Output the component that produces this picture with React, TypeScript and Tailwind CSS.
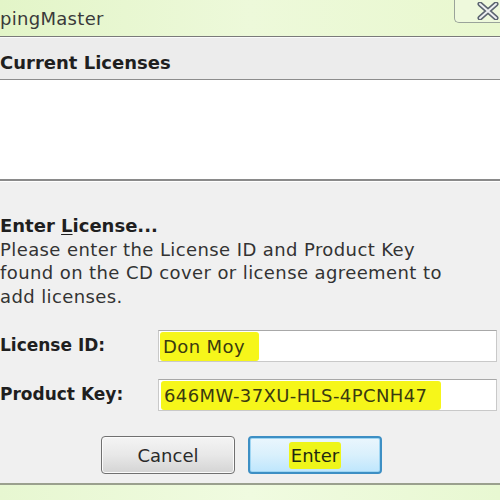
import { useState } from "react";

const font = { fontFamily: '"DejaVu Sans", Verdana, Tahoma, sans-serif' };

const CloseGlyph = () => (
  <svg width="22" height="18" viewBox="0 0 22 18">
    <path
      d="M3 2 L19 16 M19 2 L3 16"
      stroke="#5b6470"
      strokeWidth="5"
      strokeLinecap="round"
    />
    <path
      d="M3 2 L19 16 M19 2 L3 16"
      stroke="#eef0f2"
      strokeWidth="2"
      strokeLinecap="round"
    />
  </svg>
);

const App = () => {
  const [licenseId, setLicenseId] = useState("Don Moy");
  const [productKey, setProductKey] = useState("646MW-37XU-HLS-4PCNH47");

  return (
    <div
      className="w-[500px] h-[500px] overflow-hidden flex flex-col bg-[#f0f0f0] text-[#222]"
      style={font}
    >
      {/* title bar */}
      <div className="h-[37px] shrink-0 flex items-start justify-between bg-gradient-to-r from-[#e3f5c8] via-[#edf9da] to-[#e9f8cf] border-b border-[#7a7a7a]">
        <span className="mt-[5px] text-[18px] tracking-[0.3px] text-[#3a3a3a]">pingMaster</span>
        <div className="w-[46px] h-[24px] -mt-[1px] flex items-center justify-end pr-[1px] border-l border-b border-[#9aa39a] rounded-bl-[5px] bg-[#eef9dc]">
          <CloseGlyph />
        </div>
      </div>

      {/* current licenses header */}
      <div className="h-[43px] shrink-0 flex items-end pb-[6px] bg-[#ececec] border-t border-[#fafafa] border-b border-b-[#8c8c8c]">
        <span className="text-[18px] leading-[20px] font-bold text-[#1f1f1f]">Current Licenses</span>
      </div>

      {/* list area */}
      <div className="h-[101px] shrink-0 bg-white border-b-2 border-[#8a8a8a]" />

      {/* form */}
      <div className="flex-1 flex flex-col border-t border-white pt-[30px]">
        <div className="text-[18px] leading-[23.5px] tracking-[0.4px]">
          <div className="pt-[2px] font-bold text-[#1f1f1f] tracking-normal">
            Enter <span className="underline underline-offset-2">L</span>icense...
          </div>
          <div className="text-[#333] whitespace-nowrap">
            Please enter the License ID and Product Key
            <br />
            found on the CD cover or license agreement to
            <br />
            add licenses.
          </div>
        </div>

        <div className="mt-[22px] flex flex-col gap-[17px]">
          <div className="flex items-center">
            <label className="w-[158px] text-[17px] font-bold text-[#1f1f1f]">License ID:</label>
            <div className="w-[339px] h-[32px] flex items-center bg-white border border-[#c9c9c9] border-t-[#a8a8a8]">
              <input
                value={licenseId}
                onChange={(e) => setLicenseId(e.target.value)}
                className="ml-[1px] h-[29px] px-[3px] w-[99px] bg-[#f6f61a] rounded-[3px] text-[18px] tracking-[0.4px] text-[#3a3a10] outline-none"
                style={font}
              />
            </div>
          </div>
          <div className="flex items-center">
            <label className="w-[158px] text-[17px] font-bold text-[#1f1f1f]">Product Key:</label>
            <div className="w-[339px] h-[32px] flex items-center bg-white border border-[#c9c9c9] border-t-[#a8a8a8]">
              <input
                value={productKey}
                onChange={(e) => setProductKey(e.target.value)}
                className="ml-[2px] h-[29px] px-[3px] w-[280px] bg-[#f6f61a] rounded-[3px] text-[18px] tracking-[0.4px] text-[#3a3a10] outline-none"
                style={font}
              />
            </div>
          </div>
        </div>

        <div className="mt-[25px] ml-[101px] flex gap-[13px]">
          <button
            className="w-[134px] h-[38px] rounded-[4px] border border-[#707070] bg-gradient-to-b from-[#f4f4f4] via-[#e8e8e8] to-[#d4d4d4] text-[18px] text-[#2a2a2a] shadow-[inset_0_0_0_1px_#fbfbfb]"
            style={font}
          >
            Cancel
          </button>
          <button
            className="w-[134px] h-[38px] rounded-[4px] border-2 border-[#3d8fc4] bg-gradient-to-b from-[#eaf6fd] via-[#d9f0fc] to-[#bee6fd] text-[18px] text-[#1f2a10] shadow-[inset_0_0_0_1px_#9fd6f3] flex items-center justify-center"
            style={font}
          >
            <span className="bg-[#eef51a] px-[2px] rounded-[3px]">Enter</span>
          </button>
        </div>
      </div>

      {/* bottom frame */}
      <div className="h-[17px] shrink-0 border-t-2 border-[#9aa08e] bg-gradient-to-r from-[#e7f7d1] via-[#f0fbe0] to-[#e8f8d2]" />
    </div>
  );
};

export default App;
